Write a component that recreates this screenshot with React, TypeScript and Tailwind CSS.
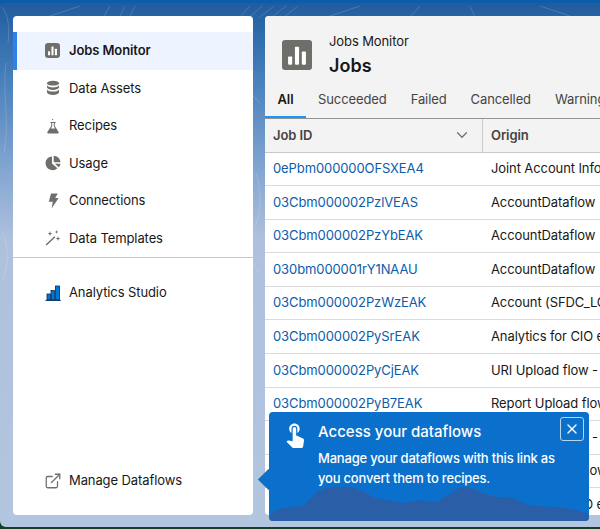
import { ChevronDown, ExternalLink, X } from 'lucide-react'
import { MdTouchApp } from 'react-icons/md'

const items = [
  { label: 'Data Assets', icon: 'db' },
  { label: 'Recipes', icon: 'flask' },
  { label: 'Usage', icon: 'pie' },
  { label: 'Connections', icon: 'bolt' },
  { label: 'Data Templates', icon: 'wand' },
]

const tabs = ['Succeeded', 'Failed', 'Cancelled', 'Warning']

const rows = [
  ['0ePbm000000OFSXEA4', 'Joint Account Information'],
  ['03Cbm000002PzlVEAS', 'AccountDataflow'],
  ['03Cbm000002PzYbEAK', 'AccountDataflow'],
  ['030bm000001rY1NAAU', 'AccountDataflow'],
  ['03Cbm000002PzWzEAK', 'Account (SFDC_LOCAL)'],
  ['03Cbm000002PySrEAK', 'Analytics for CIO eBook'],
  ['03Cbm000002PyCjEAK', 'URI Upload flow - Account'],
  ['03Cbm000002PyB7EAK', 'Report Upload flow - Leads'],
  ['03Cbm000002PxZ1EAK', 'URI Upload flow - Leads'],
  ['03Cbm000002PwQnEAK', 'Report Upload flow'],
  ['03Cbm000002PvR5EAK', 'Analytics for CIO eBook'],
]

function NavIcon({ name }: { name: string }) {
  if (name === 'db') {
    return (
      <svg width="16" height="16" viewBox="0 0 16 16" fill="#706e6b">
        <ellipse cx="8" cy="3.2" rx="6" ry="2.4" />
        <path d="M2 5.2C3 6.8 5.4 7.4 8 7.4S13 6.8 14 5.2V7.6C13.4 9 11 9.9 8 9.9S2.6 9 2 7.6Z" />
        <path d="M2 9.4C3 11 5.4 11.6 8 11.6S13 11 14 9.4V12.6C13.4 14.2 11 15 8 15S2.6 14.2 2 12.6Z" />
      </svg>
    )
  }
  if (name === 'flask') {
    return (
      <svg width="16" height="16" viewBox="0 0 16 16" fill="#706e6b">
        <circle cx="7.6" cy="1.6" r="0.7" />
        <path d="M5.4 4H10.6V5H9.8V8L13.6 14C14 14.7 13.6 15.5 12.8 15.5H3.2C2.4 15.5 2 14.7 2.4 14L6.2 8V5H5.4ZM7.2 5V8.3L5.8 10.5H10.2L8.8 8.3V5Z" fillRule="evenodd" />
      </svg>
    )
  }
  if (name === 'pie') {
    return (
      <svg width="16" height="16" viewBox="0 0 16 16" fill="#706e6b">
        <path d="M7 1.6V8.6L12.4 13.2C11.2 14.5 9.4 15.2 7.6 15.2C3.7 15.2 0.6 12.1 0.6 8.3C0.6 4.6 3.4 1.8 7 1.6Z" />
        <path d="M8.7 0.8C12.4 1 15.2 3.6 15.4 7.2H8.7Z" />
        <path d="M9.8 8.8H15.4C15.3 10.2 14.8 11.2 13.8 12.3Z" />
      </svg>
    )
  }
  if (name === 'bolt') {
    return (
      <svg width="16" height="16" viewBox="0 0 16 16" fill="#706e6b">
        <path d="M6 0.6H12.8L10.2 5H13.6L6.6 15.6L7.8 8.8H3.8Z" />
      </svg>
    )
  }
  return (
    <svg width="16" height="16" viewBox="0 0 16 16" fill="#706e6b">
      <path d="M0.6 14.6L9.4 6.2L10.4 7.2L1.6 15.6Z" />
      <path d="M5 1L5.6 3L7.4 3.6L5.6 4.2L5 6.2L4.4 4.2L2.6 3.6L4.4 3Z" />
      <path d="M11.6 0L12.1 1.4L13.4 1.9L12.1 2.4L11.6 3.8L11.1 2.4L9.8 1.9L11.1 1.4Z" />
      <path d="M13 6.2L13.6 8L15.4 8.6L13.6 9.2L13 11L12.4 9.2L10.6 8.6L12.4 8Z" />
    </svg>
  )
}

function ChartTile({ size, icon }: { size: string; icon: number }) {
  return (
    <div className={`flex shrink-0 items-center justify-center rounded-[3px] bg-[#706e6b] ${size}`}>
      <svg width={icon} height={icon} viewBox="0 0 16 16" fill="#fff">
        <rect x="1.5" y="9" width="3" height="6" rx="0.6" />
        <rect x="6.5" y="2" width="3" height="13" rx="0.6" />
        <rect x="11.5" y="5.5" width="3" height="9.5" rx="0.6" />
      </svg>
    </div>
  )
}

function Sidebar() {
  return (
    <aside className="relative flex w-[240px] shrink-0 flex-col rounded-[4px] bg-white pt-4 pb-[16px] text-[13px] tracking-[-0.1px] text-[#181818]">
      <div className="flex h-[37.5px] items-center gap-[9px] border-l-[4px] border-[#2f80ed] bg-[#eef4ff] pl-[28px] font-semibold">
        <ChartTile size="h-[15px] w-[15px]" icon={11} />
        Jobs Monitor
      </div>
      {items.map((item) => (
        <div key={item.label} className="flex h-[37.5px] items-center gap-[8px] pl-[32px]">
          <NavIcon name={item.icon} />
          {item.label}
        </div>
      ))}
      <div className="border-t border-[#c9c9c9]" />
      <div className="mt-[16px] flex h-[37px] items-center gap-[8px] pl-[32px]">
        <svg width="16" height="16" viewBox="0 0 16 16">
          <rect x="2" y="9" width="3.4" height="6" fill="#0176d3" stroke="#032d60" strokeWidth="0.8" />
          <rect x="6" y="5.5" width="3.4" height="9.5" fill="#0176d3" stroke="#032d60" strokeWidth="0.8" />
          <rect x="10.5" y="1" width="4" height="14" fill="#0176d3" stroke="#032d60" strokeWidth="0.8" />
          <path d="M0.5 15.4H15.8" stroke="#032d60" strokeWidth="1" />
        </svg>
        Analytics Studio
      </div>
      <div className="mt-auto flex h-[37px] items-center gap-[7px] pl-[31px]">
        <ExternalLink size={18} className="text-[#706e6b]" strokeWidth={1.7} />
        Manage Dataflows
      </div>
    </aside>
  )
}

function Popover() {
  return (
    <div className="absolute top-[396px] left-[4px] h-[109px] w-[320px] rounded-[4px] bg-[#0b70cb] text-white">
      <div className="absolute top-[60px] -left-[8px] h-[15px] w-[15px] rotate-45 bg-[#0b70cb]" />
      <svg className="absolute right-0 bottom-0 left-0 rounded-b-[4px]" width="320" height="44" viewBox="0 0 320 44" fill="#2a5ea6">
        <path d="M0 44V43Q3 35 8 33Q14 30 21 30Q30 30 36 28Q39 23 43 20Q50 12 58 11Q66 9 74 10Q84 10 91 13Q98 16 104 20Q111 23 118 23Q126 25 134 26Q142 25 151 23Q160 25 168 25Q176 20 184 15Q191 10 198 10Q205 11 211 15Q220 19 228 20Q236 20 244 21Q252 26 261 28Q271 29 281 30Q290 30 298 31Q310 33 320 38V44Z" />
      </svg>
      <div className="relative flex items-start pt-[8px] pl-[12px]">
        <MdTouchApp size={28} className="shrink-0" />
        <div className="ml-[9px] pt-[2px] tracking-[-0.2px]">
          <div className="text-[15px] leading-5 font-medium tracking-normal">Access your dataflows</div>
          <p className="mt-[6px] text-[13px] leading-5 font-medium">
            Manage your dataflows with this link as
            <br />
            you convert them to recipes.
          </p>
        </div>
      </div>
      <button className="absolute top-[5px] right-[5px] flex h-6 w-6 items-center justify-center rounded-[3px] border border-[#b7d4f0]">
        <X size={16} strokeWidth={2} />
      </button>
    </div>
  )
}

function JobsPanel() {
  return (
    <main className="relative min-w-0 flex-1">
      <div className="h-full overflow-hidden rounded-l-[4px] bg-white">
        <div className="bg-[#f3f3f3]">
          <div className="flex h-[68px] items-center gap-[17px] pt-[8px] pl-[17px]">
            <ChartTile size="mt-[2px] h-[30px] w-[30px]" icon={22} />
            <div className="mt-[1px]">
              <div className="text-[13px] leading-[18px] tracking-[-0.1px] text-[#181818]">Jobs Monitor</div>
              <div className="mt-[4px] text-[18px] leading-6 font-semibold text-[#181818]">Jobs</div>
            </div>
          </div>
          <div className="flex h-[35px] border-b border-[#939393] text-[13px] tracking-[-0.1px] text-[#444444]">
            <div className="flex w-[41px] shrink-0 justify-center border-b-[2px] border-[#1b96ff] pt-[6px] font-semibold text-[#181818]">All</div>
            <div className="flex gap-[24px] pl-[12px]">
              {tabs.map((tab) => (
                <div key={tab} className="shrink-0 pt-[6px]">
                  {tab}
                </div>
              ))}
            </div>
          </div>
          <div className="flex h-[33.5px] border-b border-[#c9c9c9] text-[13px] font-semibold tracking-[-0.1px] text-[#444444]">
            <div className="flex w-[218px] items-center justify-between border-r border-[#c9c9c9] pr-[11px] pl-[8px]">
              Job ID
              <ChevronDown size={18} className="text-[#706e6b]" strokeWidth={1.6} />
            </div>
            <div className="flex items-center pl-[8px]">Origin</div>
          </div>
        </div>
        {rows.map((row) => (
          <div key={row[0]} className="flex h-[33.6px] items-center border-b border-[#dddbda] text-[13px] tracking-[-0.1px] whitespace-nowrap">
            <div className="w-[218px] shrink-0 pl-[8px] text-[#0b5cab]">{row[0]}</div>
            <div className="pl-[8px] text-[#181818]">{row[1]}</div>
          </div>
        ))}
      </div>
      <Popover />
    </main>
  )
}

export default function App() {
  return (
    <div className="h-[529px] w-[600px] overflow-hidden bg-[#12402a]" style={{ fontFamily: 'Inter, "Noto Sans", sans-serif' }}>
      <div className="relative flex h-[527px] gap-3 overflow-hidden rounded-bl-[6px] border-t-[3px] border-t-[#0b5cab] bg-[linear-gradient(180deg,#215c9f_0%,#3c78b5_11%,#7da2cf_30%,#aec0dd_45%,#b3c6df_100%)] pt-[13px] pb-[12px] pl-[13px]">
        {/* faint swirls of the page background */}
        <svg className="absolute top-0 left-0" width="600" height="320" fill="none" stroke="#ffffff" strokeOpacity="0.16" strokeWidth="1">
          <path d="M2 4C8 12 10 24 8 40M6 60C2 90 10 120 4 150M80 3C70 6 60 10 50 13M110 3L104 13M125 3L120 13M135 3L130 13M250 3L240 14M262 3L250 14M274 3L260 14M286 3L272 14M298 3L284 14M360 3C350 6 340 10 330 13M420 3L410 14M470 3L475 14M540 3C550 6 560 10 570 13" />
          <path d="M260 100L250 90M256 170C262 190 262 210 254 225M252 260L260 270M2 230C8 240 10 260 2 280" />
        </svg>
        <Sidebar />
        <JobsPanel />
      </div>
    </div>
  )
}
